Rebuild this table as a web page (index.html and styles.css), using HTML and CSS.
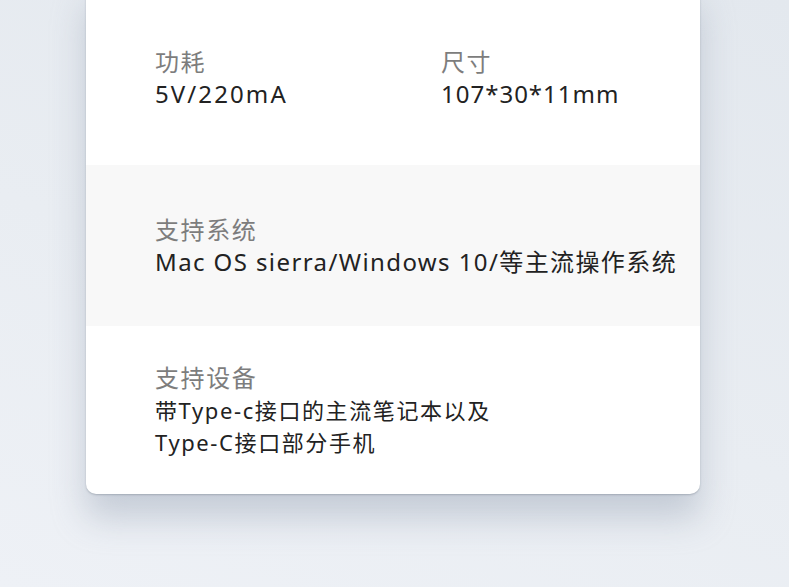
FILE: index.html
```html
<!DOCTYPE html>
<html lang="zh">
<head>
<meta charset="utf-8">
<link rel="stylesheet" href="styles.css">
</head>
<body>
<div class="page">
  <div class="card">
    <div class="row row-top">
      <div class="col">
        <div class="label">功耗</div>
        <div class="value value-num">5V/220mA</div>
      </div>
      <div class="col">
        <div class="label">尺寸</div>
        <div class="value value-dim">107*30*11mm</div>
      </div>
    </div>
    <div class="row row-gray">
      <div class="label">支持系统</div>
      <div class="value value-lg">Mac OS sierra/Windows 10/等主流操作系统</div>
    </div>
    <div class="row row-last">
      <div class="label">支持设备</div>
      <div class="value value-sm">带Type-c接口的主流笔记本以及<br>Type-C接口部分手机</div>
    </div>
  </div>
</div>
</body>
</html>
```
FILE: styles.css
```css
html, body {
  margin: 0;
  padding: 0;
}
body {
  width: 789px;
  height: 587px;
  overflow: hidden;
  background: linear-gradient(20deg, #eef1f6 0%, #e9edf2 45%, #e3e8ee 100%);
  font-family: "Noto Sans", "Noto Sans CJK SC", sans-serif;
}
.page {
  padding-left: 86px;
}
.card {
  width: 614px;
  margin-top: -20px;
  background: #ffffff;
  border-radius: 10px;
  overflow: hidden;
  box-shadow: 0 1px 2px rgba(90, 100, 115, 0.35), 0 24px 34px rgba(150, 162, 180, 0.45);
}
.row {
  padding-left: 69px;
}
.row-top {
  display: grid;
  grid-template-columns: 286px 1fr;
  padding-top: 66px;
  padding-bottom: 55px;
}
.row-gray {
  background: #f8f8f8;
  padding-top: 49px;
  padding-bottom: 48px;
}
.row-last {
  padding-top: 36px;
  padding-bottom: 36px;
}
.label {
  font-size: 24px;
  line-height: 32px;
  letter-spacing: 1.6px;
  color: #7d7d7d;
}
.value {
  font-size: 24px;
  line-height: 32px;
  color: #222222;
}
.value-num {
  letter-spacing: 2.1px;
}
.value-dim {
  letter-spacing: 1px;
}
.value-lg {
  letter-spacing: 1.4px;
}
.value-sm {
  font-size: 22px;
  letter-spacing: 1.6px;
}
```
